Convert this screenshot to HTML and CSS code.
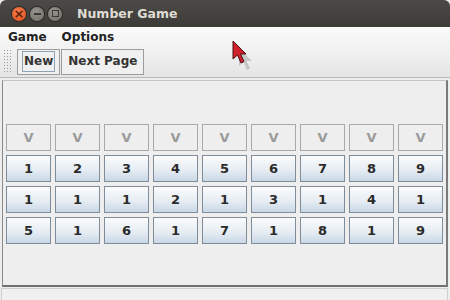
FILE: index.html
```html
<html>
<head>
    <link rel="stylesheet" href="styles.css">
</head>
<body>
<div class="window">
    <div class="titlebar">
        <div class="wbtn close"><span>×</span></div>
        <div class="wbtn min"><span class="bar"></span></div>
        <div class="wbtn max"><span class="box"></span></div>
        <div class="title">Number Game</div>
    </div>

    <div class="menubar">
        <span class="menu">Game</span>
        <span class="menu">Options</span>
    </div>

    <div class="toolbar">
        <div class="grip"></div>
        <div class="tbtn focused"><span>New</span></div>
        <div class="tbtn"><span>Next Page</span></div>
    </div>

    <div class="panel">
        <div class="grid" id="grid"></div>
    </div>

    <div class="status"></div>
</div>

<svg class="cursor" width="24" height="34" viewBox="0 0 24 34">
    <path d="M4 5 L4 23 L8.5 19 L12 27 L15 25.5 L11.5 18 L17 18 Z" fill="#999" opacity="0.45" transform="translate(3,3)"/>
    <path d="M1 1 L1 19 L5.5 15 L9 23 L12 21.5 L8.5 14 L14 14 Z" fill="#d0202b" stroke="#4a1010" stroke-width="1" stroke-linejoin="round"/>
</svg>

<script>
    var grid = document.getElementById("grid")
    var rows = [
        ['V','V','V','V','V','V','V','V','V'],
        ['1','2','3','4','5','6','7','8','9'],
        ['1','1','1','2','1','3','1','4','1'],
        ['5','1','6','1','7','1','8','1','9']
    ]

    for(var r = 0; r < rows.length; r++) {
        for(var c = 0; c < 9; c++) {
            var cell = document.createElement("div")
            cell.className = r === 0 ? 'cell off' : 'cell'
            cell.appendChild(document.createTextNode(rows[r][c]))
            grid.appendChild(cell)
        }
    }
</script>
</body>
</html>
```

FILE: styles.css
```css
html, body {
    margin: 0;
    width: 450px;
    height: 300px;
    overflow: hidden;
    background: #ededed;
    font-family: "DejaVu Sans", sans-serif;
}

.window {
    display: flex;
    flex-direction: column;
    height: 300px;
}

.titlebar {
    height: 27px;
    display: flex;
    align-items: center;
    padding-left: 12px;
    background: linear-gradient(#4b4a46, #3c3b37);
    border-radius: 6px 6px 0 0;
}

.wbtn {
    width: 14px;
    height: 14px;
    border-radius: 50%;
    margin-right: 4px;
    display: flex;
    align-items: center;
    justify-content: center;
    box-shadow: 0 0 0 1px #2c2b28;
}

.close {
    background: radial-gradient(circle at 40% 35%, #f67f4f, #df4a16);
}

.close span {
    color: #5a1e08;
    font-size: 13px;
    font-weight: bold;
    line-height: 14px;
}

.min, .max {
    background: radial-gradient(circle at 40% 35%, #96948c, #6e6c66);
}

.bar {
    width: 7px;
    height: 2px;
    background: #3a3935;
}

.box {
    width: 5px;
    height: 5px;
    border: 1px solid #3a3935;
}

.title {
    margin-left: 11px;
    color: #dfdbd2;
    font-weight: bold;
    font-size: 12.5px;
}

.menubar {
    height: 19px;
    display: flex;
    align-items: flex-end;
    padding-left: 8px;
    background: linear-gradient(#fbfbfb, #f2f2f2);
    font-size: 12px;
    font-weight: bold;
    color: #222;
}

.menu {
    margin-right: 15px;
    line-height: 18px;
}

.toolbar {
    height: 31px;
    display: flex;
    align-items: center;
    padding-left: 3px;
    background: linear-gradient(#f4f4f4, #e4e4e4);
    border-bottom: 1px solid #b9b9b9;
}

.grip {
    width: 10px;
    height: 25px;
    margin-right: 4px;
    background-image: radial-gradient(#9a9a9a 0.6px, transparent 0.8px);
    background-size: 3px 3px;
}

.tbtn {
    height: 24px;
    border: 1px solid #9c9c9c;
    background: #f0f0f0;
    display: flex;
    align-items: center;
    padding: 0 4px;
    margin-right: 1px;
    font-size: 12px;
    font-weight: bold;
    color: #333;
}

.tbtn span {
    padding: 0 1px;
    line-height: 19px;
    border: 1px solid transparent;
}

.focused span {
    border-color: #8fa3b6;
}

.panel {
    flex: 1;
    margin: 2px 2px 0 2px;
    border-top: 1px solid #c4c4c4;
    border-left: 1px solid #8a8a8a;
    border-right: 2px solid #7a7a7a;
    border-bottom: 2px solid #6f6f6f;
    padding: 43px 0 0 3px;
    background: #eeeeee;
}

.grid {
    display: grid;
    grid-template-columns: repeat(9, 45px);
    grid-auto-rows: 27px;
    gap: 4px;
}

.cell {
    box-sizing: border-box;
    border: 1px solid #7f8c99;
    background: linear-gradient(#fbfcfd, #e4ebf2 60%, #c8d7e6);
    display: flex;
    align-items: center;
    justify-content: center;
    font-size: 13px;
    font-weight: bold;
    color: #2b2b2b;
}

.cell.off {
    border-color: #a9a9a9;
    background: #eeeeee;
    color: #9a9a9a;
}

.status {
    height: 11px;
    margin: 1px 2px 0 1px;
    border: 1px solid #d0d0d0;
    border-bottom: none;
    background: #f0f0f0;
}

.cursor {
    position: absolute;
    left: 232px;
    top: 40px;
}
```
